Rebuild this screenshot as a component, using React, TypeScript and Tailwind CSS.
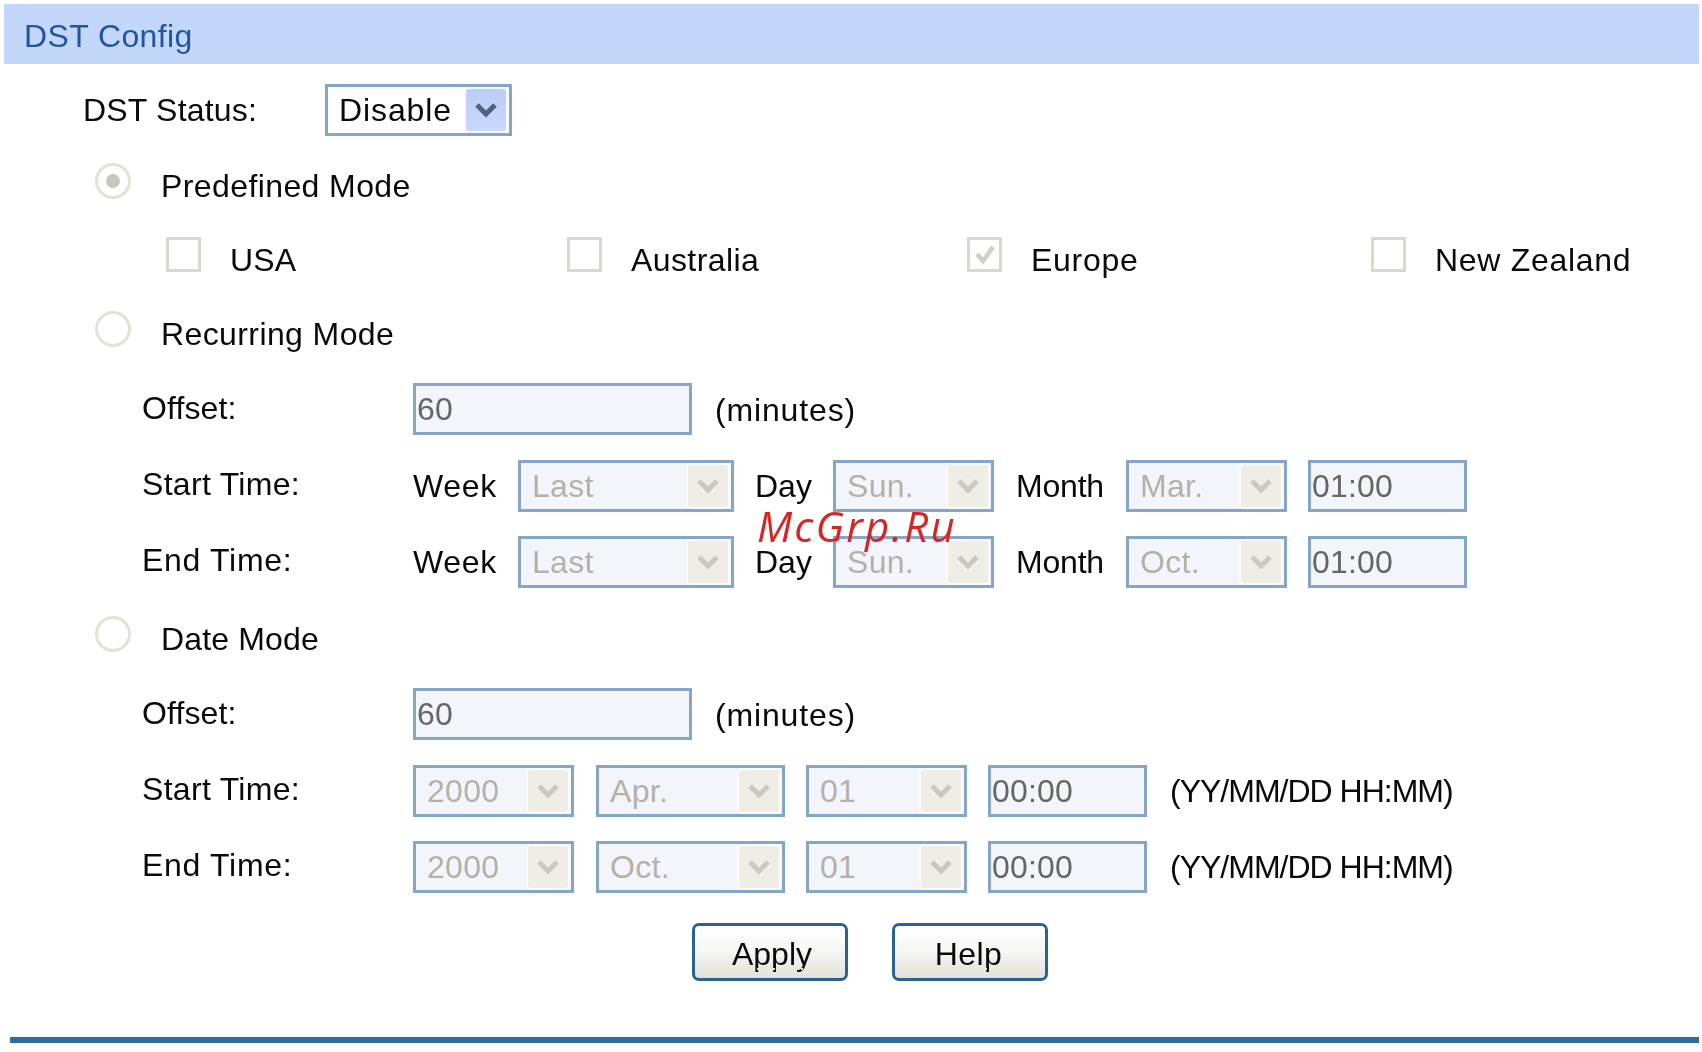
const labelClass = 'text-[32px] leading-none text-[#0a0a0a] whitespace-nowrap';

function Chevron({ color }: { color: string }) {
  return (
    <svg width="24" height="18" viewBox="0 0 24 18" fill="none">
      <path d="M3 4 L12 13 L21 4" stroke={color} strokeWidth="5" />
    </svg>
  );
}

function Select({ value, className, enabled }: { value: string; className: string; enabled?: boolean }) {
  return (
    <div
      className={`flex h-full items-center justify-between border-[3px] border-[#86a6c9] pl-[11px] pr-[3px] ${
        enabled ? 'bg-white' : 'bg-[#f3f5fb]'
      } ${className}`}
    >
      <span className={`text-[32px] leading-none ${enabled ? 'tracking-[0.9px] text-[#0a0a0a]' : 'tracking-[0.3px] text-[#b4b2a8]'}`}>{value}</span>
      {enabled ? (
        <div className="flex h-[42px] w-[40px] items-center justify-center rounded-[3px] bg-gradient-to-b from-[#bccdf6] to-[#c9d9fc] shadow-[0_0_0_2px_#f6f8fd]">
          <Chevron color="#4d6185" />
        </div>
      ) : (
        <div className="flex h-[42px] w-[40px] items-center justify-center rounded-[3px] bg-[#eeeee6] shadow-[0_0_0_2px_#fbfbf9]">
          <Chevron color="#c9c9bf" />
        </div>
      )}
    </div>
  );
}

function Field({ value, className }: { value: string; className: string }) {
  return (
    <div className={`flex h-full items-center border-[3px] border-[#86a6c9] bg-[#f3f5fb] pl-[1px] ${className}`}>
      <span className="text-[32px] leading-none tracking-[0.2px] text-[#666]">{value}</span>
    </div>
  );
}

function Radio({ checked }: { checked?: boolean }) {
  return (
    <div className="flex h-[36px] w-[36px] items-center justify-center rounded-full border-[3px] border-[#e2e2da] bg-white">
      {checked && <div className="h-[14px] w-[14px] rounded-full bg-[#c8c8c0]" />}
    </div>
  );
}

function Checkbox({ checked }: { checked?: boolean }) {
  return (
    <div className="flex h-[35px] w-[35px] items-center justify-center border-[3px] border-[#d8d8ce] bg-white">
      {checked && (
        <svg width="24" height="24" viewBox="0 0 24 24" fill="none">
          <path d="M4 11 L10 18 L20 4" stroke="#cfcfc5" strokeWidth="4.5" />
        </svg>
      )}
    </div>
  );
}

function ModeRow({ label, checked, className, track }: { label: string; checked?: boolean; className: string; track: string }) {
  return (
    <div className={`flex h-[36px] pl-[95px] ${className}`}>
      <Radio checked={checked} />
      <span className={`${labelClass} ml-[30px] mt-[7px] ${track}`}>{label}</span>
    </div>
  );
}

function Country({ label, checked, className, track }: { label: string; checked?: boolean; className?: string; track: string }) {
  return (
    <div className={`flex ${className ?? ''}`}>
      <Checkbox checked={checked} />
      <span className={`${labelClass} ml-[29px] mt-[7px] ${track}`}>{label}</span>
    </div>
  );
}

function OffsetRow({ className }: { className: string }) {
  return (
    <div className={`flex h-[52px] items-center pl-[142px] ${className}`}>
      <span className={`${labelClass} mb-[3px] w-[271px] tracking-[0.1px]`}>Offset:</span>
      <Field value="60" className="w-[279px]" />
      <span className={`${labelClass} ml-[23px] mt-[1px] tracking-[0.85px]`}>(minutes)</span>
    </div>
  );
}

function WeekRow({ label, month, className, track }: { label: string; month: string; className: string; track: string }) {
  return (
    <div className={`flex h-[52px] items-center pl-[142px] ${className}`}>
      <span className={`${labelClass} mb-[5px] w-[271px] ${track}`}>{label}</span>
      <span className={`${labelClass} w-[105px] tracking-[0.7px]`}>Week</span>
      <Select value="Last" className="w-[216px]" />
      <span className={`${labelClass} ml-[21px] w-[78px]`}>Day</span>
      <Select value="Sun." className="w-[161px]" />
      <span className={`${labelClass} ml-[22px] w-[110px] tracking-[-0.2px]`}>Month</span>
      <Select value={month} className="w-[161px]" />
      <Field value="01:00" className="ml-[21px] w-[159px]" />
    </div>
  );
}

function DateRow({ label, month, className, track }: { label: string; month: string; className: string; track: string }) {
  return (
    <div className={`flex h-[52px] items-center pl-[142px] ${className}`}>
      <span className={`${labelClass} mb-[5px] w-[271px] ${track}`}>{label}</span>
      <Select value="2000" className="w-[161px]" />
      <Select value={month} className="ml-[22px] w-[189px]" />
      <Select value="01" className="ml-[21px] w-[161px]" />
      <Field value="00:00" className="ml-[21px] w-[159px]" />
      <span className={`${labelClass} ml-[23px] tracking-[-1px]`}>(YY/MM/DD HH:MM)</span>
    </div>
  );
}

function Button({ label, className }: { label: string; className?: string }) {
  return (
    <button
      className={`relative h-[58px] w-[156px] rounded-[7px] border-[3px] border-[#2b6296] bg-gradient-to-b from-white via-[#f6f6f4] to-[#e2e1da] pt-[3px] text-[32px] leading-none text-[#0a0a0a] ${className ?? ''}`}
    >
      {label}
      <span className="absolute bottom-[8px] left-[6px] right-[6px] border-b-2 border-dotted border-[#f2e9c4]" />
    </button>
  );
}

export default function App() {
  return (
    <div className="relative h-[1052px] w-[1702px] overflow-hidden bg-white font-['Liberation_Sans',sans-serif]">
      <div className="blur-[0.5px]">
        {/* Title bar */}
        <div className="ml-[4px] mr-[3px] mt-[4px] flex h-[60px] items-center bg-[#c3d7fb] pl-[20px] pt-[4px] text-[32px] leading-none tracking-[0.4px] text-[#24549e]">
          DST Config
        </div>

        {/* Status */}
        <div className="mt-[20px] flex h-[52px] items-center pl-[83px]">
          <span className={`${labelClass} w-[242px] tracking-[0.2px]`}>DST Status:</span>
          <Select value="Disable" enabled className="w-[187px]" />
        </div>

        <ModeRow label="Predefined Mode" checked className="mt-[27px]" track="tracking-[0.4px]" />

        <div className="mt-[38px] flex h-[35px] pl-[166px]">
          <Country label="USA" className="w-[401px]" track="tracking-[0.1px]" />
          <Country label="Australia" className="w-[400px]" track="tracking-[0.4px]" />
          <Country label="Europe" checked className="w-[404px]" track="tracking-[0.7px]" />
          <Country label="New Zealand" track="tracking-[0.7px]" />
        </div>

        <ModeRow label="Recurring Mode" className="mt-[39px]" track="tracking-[0.4px]" />
        <OffsetRow className="mt-[36px]" />
        <WeekRow label="Start Time:" month="Mar." className="mt-[25px]" track="tracking-[0.3px]" />
        <WeekRow label="End Time:" month="Oct." className="mt-[24px]" track="tracking-[0.7px]" />

        <ModeRow label="Date Mode" className="mt-[28px]" track="tracking-[0.15px]" />
        <OffsetRow className="mt-[36px]" />
        <DateRow label="Start Time:" month="Apr." className="mt-[25px]" track="tracking-[0.3px]" />
        <DateRow label="End Time:" month="Oct." className="mt-[24px]" track="tracking-[0.7px]" />

        <div className="mt-[30px] flex pl-[692px]">
          <Button label="Apply" className="pl-[4px]" />
          <Button label="Help" className="ml-[44px] pr-[3px] tracking-[0.4px]" />
        </div>

        <div className="ml-[10px] mr-[3px] mt-[56px] h-[6px] bg-[#2f6c9f]" />
      </div>

      {/* Watermark */}
      <div className="absolute left-[757px] top-[504px] font-['Open_Sans',sans-serif] text-[42px] italic leading-[44px] tracking-[2.2px] text-[#dc2323]">
        McGrp.Ru
      </div>
    </div>
  );
}
